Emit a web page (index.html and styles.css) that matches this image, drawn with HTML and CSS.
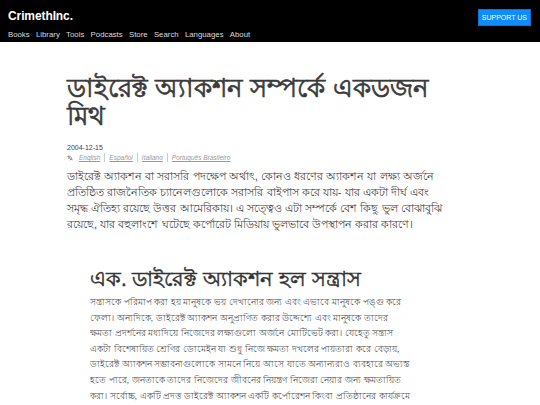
FILE: index.html
```html
<!DOCTYPE html>
<html>
<head>
<meta charset="utf-8">
<title>ডাইরেক্ট অ্যাকশন সম্পর্কে একডজন মিথ</title>
<link rel="stylesheet" href="styles.css">
</head>
<body>
<header class="site-header">
  <div class="brand-col">
    <div class="brand">CrimethInc.</div>
    <nav class="nav">
      <a href="#">Books</a><a href="#">Library</a><a href="#">Tools</a><a href="#">Podcasts</a><a href="#">Store</a><a href="#">Search</a><a href="#">Languages</a><a href="#">About</a>
    </nav>
  </div>
  <a class="support" href="#">SUPPORT US</a>
</header>
<main class="article">
  <h1 class="title">ডাইরেক্ট অ্যাকশন সম্পর্কে একডজন<br>মিথ</h1>
  <div class="date">2004-12-15</div>
  <div class="langs">
    <svg class="lang-icon" viewBox="0 0 10 10" width="6" height="6"><path d="M1 2h5M3.5 1v1M2 2c0 2 1.5 3 3 3.5M5.5 2c-.5 1.5-1.5 3-4 4M5 9l2-5 2 5M5.7 7.5h2.6" fill="none" stroke="#666" stroke-width="1"/></svg>
    <a href="#">English</a><span class="sep"></span><a href="#">Español</a><span class="sep"></span><a href="#">Italiano</a><span class="sep"></span><a href="#">Português Brasileiro</a>
  </div>
  <p class="lead">ডাইরেক্ট অ্যাকশন বা সরাসরি পদক্ষেপ অর্থাৎ, কোনও ধরণের অ্যাকশন যা লক্ষ্য অর্জনে<br>প্রতিষ্ঠিত রাজনৈতিক চ্যানেলগুলোকে সরাসরি বাইপাস করে যায়- যার একটা দীর্ঘ এবং<br>সমৃদ্ধ ঐতিহ্য রয়েছে উত্তর আমেরিকায়। এ সত্ত্বেও এটা সম্পর্কে বেশ কিছু ভুল বোঝাবুঝি<br>রয়েছে, যার বহুলাংশে ঘটেছে কর্পোরেট মিডিয়ায় ভুলভাবে উপস্থাপন করার কারণে।</p>
  <section class="body">
    <h2 class="section-title">এক. ডাইরেক্ট অ্যাকশন হল সন্ত্রাস</h2>
    <p class="text">সন্ত্রাসকে পরিমাপ করা হয় মানুষকে ভয় দেখানোর জন্য এবং এভাবে মানুষকে পঙ্গু করে<br>ফেলা। অন্যদিকে, ডাইরেক্ট অ্যাকশন অনুপ্রাণিত করার উদ্দেশ্যে এবং মানুষকে তাদের<br>ক্ষমতা প্রদর্শনের মধ্যদিয়ে নিজেদের লক্ষ্যগুলো অর্জনে মোটিভেট করা। যেহেতু সন্ত্রাস<br>একটা বিশেষায়িত শ্রেণির ডোমেইন যা শুধু নিজে ক্ষমতা দখলের পায়তারা করে বেড়ায়,<br>ডাইরেক্ট অ্যাকশন সম্ভাবনাগুলোকে সামনে নিয়ে আসে যাতে অন্যান্যরাও ব্যবহারে অভ্যস্ত<br>হতে পারে, জনতাকে তাদের নিজেদের জীবনের নিয়ন্ত্রণ নিজেরা নেয়ার জন্য ক্ষমতায়িত<br>করা। সর্বোচ্চ, একটি প্রদত্ত ডাইরেক্ট অ্যাকশন একটি কর্পোরেশন কিংবা প্রতিষ্ঠানের কার্যক্রমে<br>বাধা সৃষ্টি করতে পারে।</p>
  </section>
</main>
</body>
</html>
```
FILE: styles.css
```css
* { box-sizing: border-box; }
html, body { margin: 0; padding: 0; }
body {
  background: #fff;
  color: #333;
  font-family: "Liberation Sans", sans-serif;
}
a { color: inherit; text-decoration: none; }
.site-header {
  background: #000;
  height: 42px;
  display: flex;
  justify-content: space-between;
  align-items: flex-start;
  padding: 8px 9px 0 8px;
}
.brand {
  color: #fff;
  font-weight: bold;
  font-size: 12px;
  line-height: 13px;
  letter-spacing: -0.1px;
  margin-top: 2px;
}
.nav {
  display: flex;
  gap: 6.3px;
  margin-top: 7px;
  font-size: 7.8px;
  line-height: 9px;
  color: #ddd;
}
.support {
  background: #0f8cff;
  color: #fff;
  font-size: 7px;
  line-height: 15px;
  padding: 0 3px;
  margin-top: 1px;
  border: 1px solid #0a73d9;
}
.article {
  padding: 32px 5px 0 67px;
}
.title {
  margin: 0;
  font-weight: normal;
  font-size: 26.1px;
  line-height: 28px;
  color: #3a3a3a;
  -webkit-text-stroke: 0.7px #3a3a3a;
  white-space: nowrap;
}
.date {
  margin-top: 13px;
  font-size: 7px;
  line-height: 9px;
  color: #444;
}
.langs {
  display: flex;
  align-items: center;
  margin-top: 1px;
  font-size: 6.5px;
  line-height: 9px;
  color: #999;
  font-style: italic;
}
.lang-icon { margin-right: 6px; }
.langs a { text-decoration: underline; }
.sep { width: 1px; height: 9px; background: #ccc; margin: 0 4px; }
.lead {
  margin: 6px 0 0 0;
  font-size: 11.3px;
  line-height: 16px;
  color: #444;
  white-space: nowrap;
}
.body { padding-left: 23px; }
.section-title {
  margin: 33px 0 0 0;
  font-size: 20.6px;
  line-height: 28px;
  font-weight: normal;
  color: #333;
  -webkit-text-stroke: 0.5px #333;
}
.text {
  margin: 1px 0 0 0;
  font-size: 9.4px;
  line-height: 15.6px;
  color: #555;
  white-space: nowrap;
}
```
